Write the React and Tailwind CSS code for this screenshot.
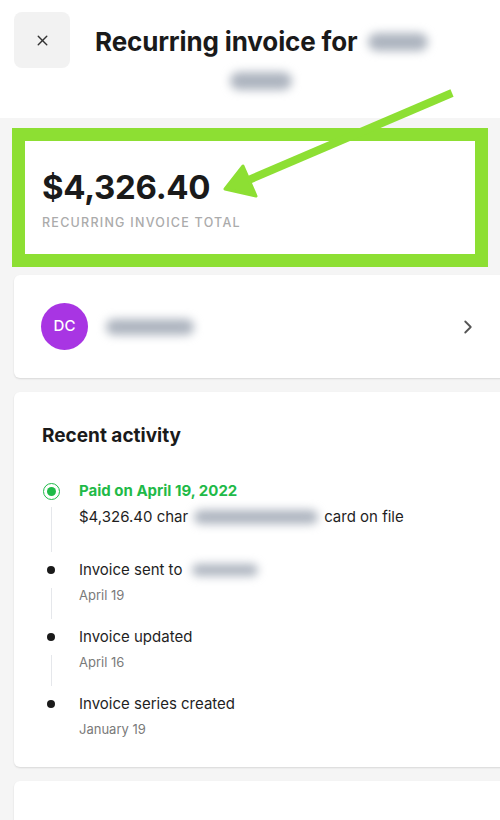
import React from 'react';
import { X, ChevronRight } from 'lucide-react';

const Blur = ({ className }) => (
  <span className={`inline-block rounded-full bg-gray-400/80 blur-[5px] ${className}`} />
);

const activity = [
  { title: 'Invoice sent to', blur: true, date: 'April 19' },
  { title: 'Invoice updated', date: 'April 16' },
  { title: 'Invoice series created', date: 'January 19' },
];

const TimelineItem = ({ item, last }) => (
  <div className="flex">
    <div className="w-[18px] flex flex-col items-center">
      <div className="h-[22px] flex items-center">
        <span className="w-[8px] h-[8px] rounded-full bg-[#1a1a1a]" />
      </div>
      {!last && <div className="flex-1 w-px bg-gray-200 my-[7px]" />}
    </div>
    <div className={`ml-[19px] ${last ? '' : 'pb-[21px]'}`}>
      <div className="flex items-center text-[15px] leading-[22px] text-[#1f1f1f]">
        {item.title}
        {item.blur && <Blur className="ml-[10px] w-[66px] h-[12px]" />}
      </div>
      <div className="mt-[4px] text-[13px] leading-[20px] text-[#7a7a7a]">{item.date}</div>
    </div>
  </div>
);

export default function App() {
  return (
    <div className="relative w-[500px] h-[820px] overflow-hidden bg-[#f5f5f5]" style={{ fontFamily: 'Inter, "Noto Sans", sans-serif' }}>
      {/* header */}
      <div className="h-[118px] bg-white flex items-start pt-[12px] pl-[14px]">
        <button className="w-[56px] h-[56px] shrink-0 rounded-lg bg-[#f2f2f2] flex items-center justify-center text-[#333]">
          <X size={17} strokeWidth={2} />
        </button>
        <div className="flex flex-col items-center ml-[25px] pt-[14px]">
          <div className="flex items-center">
            <h1 className="text-[26px] leading-[32px] font-bold text-[#1a1a1a] tracking-[-0.005em]">Recurring invoice for</h1>
            <Blur className="ml-[10px] w-[60px] h-[18px]" />
          </div>
          <Blur className="mt-[14px] w-[62px] h-[18px]" />
        </div>
      </div>

      {/* total */}
      <div className="mt-[10px] mx-[12px] border-[13px] border-[#8ddf33] bg-white pl-[17px] pt-[26px] pb-[23px]">
        <div className="text-[33px] leading-[40px] font-bold text-[#1a1a1a] tracking-[-0.01em]">$4,326.40</div>
        <div className="mt-[8px] text-[12.5px] leading-[16px] font-medium tracking-[0.1em] text-[#ababab]">RECURRING INVOICE TOTAL</div>
      </div>

      {/* customer */}
      <div className="mt-[8px] ml-[14px] mr-[-10px] h-[103px] bg-white rounded-md shadow-[0_1px_2px_rgba(0,0,0,0.12)] flex items-center pl-[27px] pr-[31px]">
        <div className="w-[47px] h-[47px] rounded-full bg-[#a835e3] flex items-center justify-center text-white text-[15px] font-medium">DC</div>
        <Blur className="ml-[18px] w-[88px] h-[16px]" />
        <div className="flex-1" />
        <ChevronRight size={22} strokeWidth={2} className="text-[#555]" />
      </div>

      {/* recent activity */}
      <div className="mt-[14px] ml-[14px] mr-[-10px] bg-white rounded-md shadow-[0_1px_2px_rgba(0,0,0,0.12)] px-[28px] pt-[31px] pb-[28px]">
        <h2 className="text-[19px] leading-[26px] font-bold text-[#1a1a1a]">Recent activity</h2>
        <div className="mt-[31px]">
          <div className="flex">
            <div className="w-[18px] flex flex-col items-center">
              <div className="h-[22px] flex items-center">
                <span className="w-[17px] h-[17px] rounded-full border-[1.5px] border-[#1fba48] flex items-center justify-center">
                  <span className="w-[9px] h-[9px] rounded-full bg-[#1fba48]" />
                </span>
              </div>
              <div className="flex-1 w-px bg-gray-200 mt-[5px] mb-[7px]" />
            </div>
            <div className="ml-[19px] pb-[31px]">
              <div className="text-[15px] leading-[22px] font-bold text-[#1fba48]">Paid on April 19, 2022</div>
              <div className="mt-[4px] flex items-center text-[15px] leading-[22px] text-[#1f1f1f]">
                $4,326.40 char
                <Blur className="mx-[6px] w-[124px] h-[14px] bg-gray-300" />
                card on file
              </div>
            </div>
          </div>
          {activity.map((item, i) => (
            <TimelineItem key={item.title} item={item} last={i === activity.length - 1} />
          ))}
        </div>
      </div>

      <div className="mt-[14px] ml-[14px] mr-[-10px] h-[60px] bg-white rounded-md shadow-[0_1px_2px_rgba(0,0,0,0.12)]" />

      {/* annotation arrow */}
      <svg className="absolute left-0 top-0 pointer-events-none" width="500" height="820">
        <line x1="452" y1="93" x2="244" y2="182" stroke="#8ddf33" strokeWidth="8" />
        <polygon points="225,189 243,166 256,196" fill="#8ddf33" stroke="#8ddf33" strokeWidth="3" strokeLinejoin="round" />
      </svg>
    </div>
  );
}
